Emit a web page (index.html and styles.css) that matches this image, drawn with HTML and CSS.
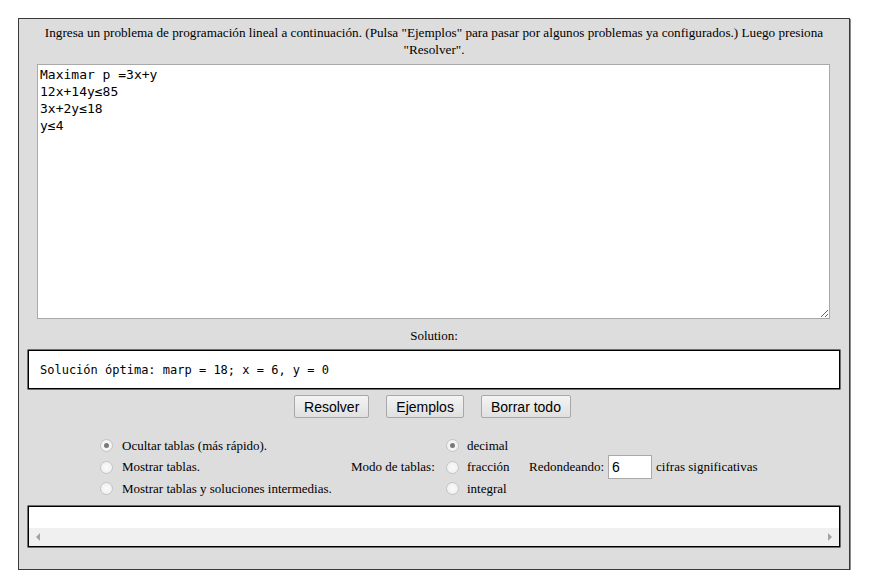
FILE: index.html
```html
<!DOCTYPE html>
<html lang="es">
<head>
<meta charset="utf-8">
<title>Programación lineal</title>
<link rel="stylesheet" href="styles.css">
</head>
<body>
<div class="panel">
  <p class="intro">Ingresa un problema de programación lineal a continuación. (Pulsa "Ejemplos" para pasar por algunos problemas ya configurados.) Luego presiona "Resolver".</p>
  <div class="editor-wrap">
    <textarea class="editor" spellcheck="false">Maximar p =3x+y
12x+14y≤85
3x+2y≤18
y≤4</textarea>
  </div>
  <div class="sol-label">Solution:</div>
  <div class="solution">Solución óptima: marp = 18; x = 6, y = 0</div>
  <div class="buttons">
    <button class="btn">Resolver</button>
    <button class="btn">Ejemplos</button>
    <button class="btn">Borrar todo</button>
  </div>
  <div class="options">
    <div class="radio-col left-col">
      <label class="opt"><span class="radio checked"></span>Ocultar tablas (más rápido).</label>
      <label class="opt"><span class="radio"></span>Mostrar tablas.</label>
      <label class="opt"><span class="radio"></span>Mostrar tablas y soluciones intermedias.</label>
    </div>
    <div class="mode-label">Modo de tablas:</div>
    <div class="radio-col mode-col">
      <label class="opt"><span class="radio checked"></span>decimal</label>
      <label class="opt"><span class="radio"></span>fracción</label>
      <label class="opt"><span class="radio"></span>integral</label>
    </div>
    <div class="rounding">
      <span>Redondeando:</span>
      <input class="digits" type="text" value="6">
      <span>cifras significativas</span>
    </div>
  </div>
  <div class="output">
    <div class="output-body"></div>
    <div class="hscroll">
      <span class="arrow arrow-left"></span>
      <span class="arrow arrow-right"></span>
    </div>
  </div>
</div>
</body>
</html>
```
FILE: styles.css
```css
html, body {
  margin: 0;
  padding: 0;
  background: #ffffff;
}

body {
  font-family: "Liberation Serif", "Times New Roman", serif;
  font-size: 13px;
  color: #000;
}

.panel {
  margin: 18px 0 0 18px;
  width: 832px;
  box-sizing: border-box;
  background: #dddddd;
  border: 1px solid #3a3a3a;
  box-shadow: 1px 1px 0 #8a8a8a;
  padding: 5px 9px 22px 9px;
}

.intro {
  margin: 0 auto;
  width: 800px;
  text-align: center;
  line-height: 17px;
  font-size: 13.2px;
}

.editor-wrap {
  padding: 6px 9px 0 9px;
}

.editor {
  display: block;
  width: 793px;
  height: 255px;
  box-sizing: border-box;
  margin: 0;
  border: 1px solid #a9a9a9;
  background: #fff;
  padding: 1px 2px;
  font-family: "DejaVu Sans Mono", "Liberation Mono", monospace;
  font-size: 13px;
  line-height: 17px;
  color: #000;
  resize: both;
  outline: none;
}

.sol-label {
  text-align: center;
  margin-top: 8px;
  line-height: 18px;
}

.solution {
  margin-top: 5px;
  height: 39px;
  box-sizing: border-box;
  background: #fff;
  border: 1px solid #000;
  box-shadow: 0 0 0 0.5px #000;
  padding: 0 11px;
  display: flex;
  align-items: center;
  font-family: "DejaVu Sans Mono", "Liberation Mono", monospace;
  font-size: 12px;
}

.buttons {
  display: flex;
  justify-content: center;
  gap: 17px;
  margin-top: 6px;
  padding-right: 3px;
}

.btn {
  font-family: "Liberation Sans", Arial, sans-serif;
  font-size: 14px;
  height: 23px;
  padding: 0 9px;
  border: 1px solid #a8a8a8;
  border-radius: 2px;
  background: linear-gradient(#f4f4f4, #e0e0e0);
  color: #000;
  line-height: 20px;
}

.options {
  display: flex;
  align-items: center;
  margin-top: 17px;
  padding-left: 72px;
}

.radio-col {
  display: flex;
  flex-direction: column;
}

.opt {
  display: flex;
  align-items: center;
  height: 21.5px;
  white-space: nowrap;
}

.radio {
  width: 11px;
  height: 11px;
  border-radius: 50%;
  border: 1px solid #c4c4c4;
  background: radial-gradient(circle, #fbfbfb 0%, #ececec 100%);
  box-sizing: content-box;
  position: relative;
  flex: none;
}

.left-col .radio {
  margin-right: 9px;
}

.mode-col .radio {
  margin-right: 8px;
}

.radio.checked::after {
  content: "";
  position: absolute;
  left: 3px;
  top: 3px;
  width: 5px;
  height: 5px;
  border-radius: 50%;
  background: #7a7a7a;
}

.left-col {
  width: 251px;
}

.mode-label {
  width: 95px;
}

.mode-col {
  width: 83px;
}

.rounding {
  display: flex;
  align-items: center;
}

.digits {
  width: 44px;
  height: 24px;
  box-sizing: border-box;
  margin: 0 4px 0 4px;
  border: 1px solid #a9a9a9;
  padding: 0 3px;
  font-family: "Liberation Sans", Arial, sans-serif;
  font-size: 14px;
  background: #fff;
  outline: none;
}

.output {
  margin-top: 6px;
  height: 41px;
  box-sizing: border-box;
  border: 1px solid #000;
  box-shadow: 0 0 0 0.5px #000;
  background: #fff;
  display: flex;
  flex-direction: column;
}

.output-body {
  flex: 1;
}

.hscroll {
  height: 18px;
  background: #f0f0f0;
  display: flex;
  justify-content: space-between;
  align-items: center;
  padding: 0 7px;
}

.arrow {
  width: 0;
  height: 0;
  border-top: 4px solid transparent;
  border-bottom: 4px solid transparent;
}

.arrow-left {
  border-right: 4px solid #a3a3a3;
}

.arrow-right {
  border-left: 4px solid #a3a3a3;
}
```
